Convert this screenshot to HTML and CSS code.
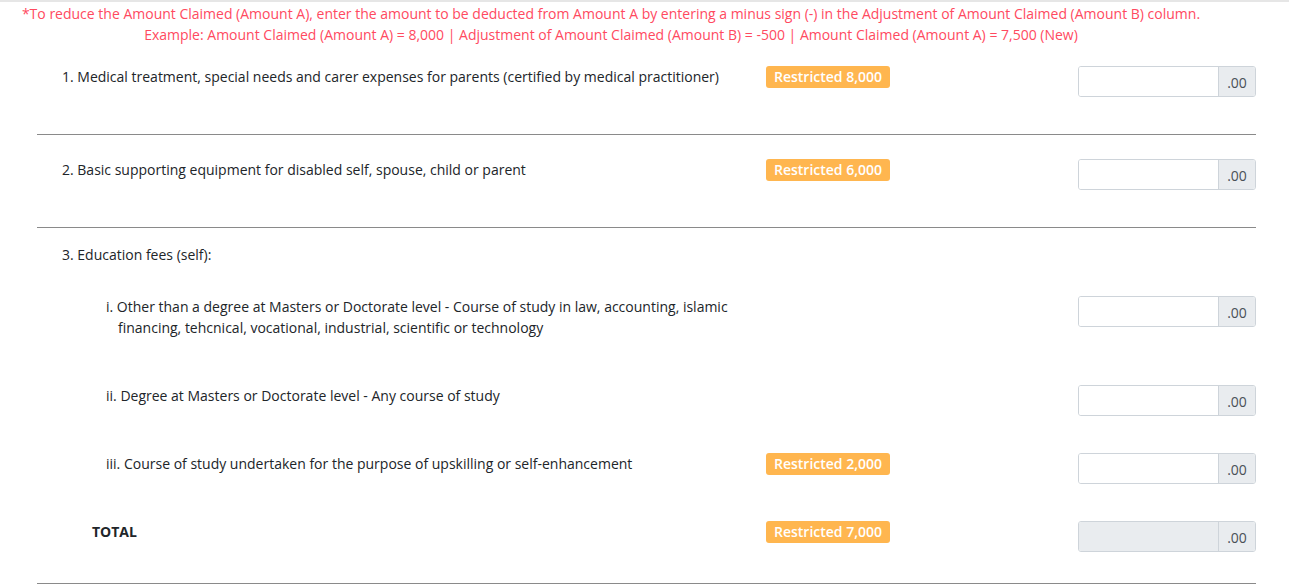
FILE: index.html
```html
<!DOCTYPE html>
<html>
<head>
<meta charset="utf-8">
<link rel="stylesheet" href="styles.css">
</head>
<body>
<div class="page">
  <div class="note">
    <div>*To reduce the Amount Claimed (Amount A), enter the amount to be deducted from Amount A by entering a minus sign (-) in the Adjustment of Amount Claimed (Amount B) column.</div>
    <div>Example: Amount Claimed (Amount A) = 8,000 | Adjustment of Amount Claimed (Amount B) = -500 | Amount Claimed (Amount A) = 7,500 (New)</div>
  </div>

  <div class="section first">
    <div class="item">
      <div class="label">1. Medical treatment, special needs and carer expenses for parents (certified by medical practitioner)</div>
      <div class="limit"><span class="badge">Restricted 8,000</span></div>
      <div class="amount"><div class="field"></div><div class="addon">.00</div></div>
    </div>
  </div>

  <div class="section">
    <div class="item">
      <div class="label">2. Basic supporting equipment for disabled self, spouse, child or parent</div>
      <div class="limit"><span class="badge">Restricted 6,000</span></div>
      <div class="amount"><div class="field"></div><div class="addon">.00</div></div>
    </div>
  </div>

  <div class="section group">
    <div class="title">3. Education fees (self):</div>
    <div class="item sub tall">
      <div class="label">i. Other than a degree at Masters or Doctorate level - Course of study in law, accounting, islamic financing, tehcnical, vocational, industrial, scientific or technology</div>
      <div class="limit"></div>
      <div class="amount"><div class="field"></div><div class="addon">.00</div></div>
    </div>
    <div class="item sub">
      <div class="label">ii. Degree at Masters or Doctorate level - Any course of study</div>
      <div class="limit"></div>
      <div class="amount"><div class="field"></div><div class="addon">.00</div></div>
    </div>
    <div class="item sub">
      <div class="label">iii. Course of study undertaken for the purpose of upskilling or self-enhancement</div>
      <div class="limit"><span class="badge">Restricted 2,000</span></div>
      <div class="amount"><div class="field"></div><div class="addon">.00</div></div>
    </div>
    <div class="item total last">
      <div class="label">TOTAL</div>
      <div class="limit"><span class="badge">Restricted 7,000</span></div>
      <div class="amount"><div class="field disabled"></div><div class="addon">.00</div></div>
    </div>
  </div>
</div>
</body>
</html>
```

FILE: styles.css
```css
html, body {
  margin: 0;
  padding: 0;
  background: #ffffff;
}
body {
  font-family: "Open Sans", "Noto Sans", sans-serif;
  font-size: 14px;
  color: #212529;
  border-top: 2px solid #e6e6e6;
}
.page {
  width: 1289px;
}
.note {
  width: 1222px;
  text-align: center;
  color: #ff4a5f;
  line-height: 21px;
  padding-top: 1px;
}
.section {
  margin-left: 37px;
  width: 1219px;
  border-bottom: 1px solid #8a8a8a;
  padding-top: 24px;
}
.section.first {
  padding-top: 21px;
}
.section.group {
  padding-top: 16px;
}
.title {
  padding-left: 25px;
  line-height: 22px;
  margin-bottom: 30px;
}
.item {
  display: grid;
  grid-template-columns: 729px 312px 178px;
  align-items: start;
  margin-bottom: 37px;
}
.item.tall {
  margin-bottom: 47px;
}
.item.last {
  margin-bottom: 31px;
}
.label {
  padding-left: 25px;
  padding-right: 10px;
  line-height: 22px;
}
.sub .label {
  padding-left: 81px;
  text-indent: -12px;
  line-height: 21px;
}
.total .label {
  padding-left: 55px;
  font-weight: 700;
}
.badge {
  display: inline-block;
  background: #ffb64f;
  color: #ffffff;
  font-weight: 600;
  font-size: 14px;
  line-height: 22px;
  height: 22px;
  padding: 0 8px;
  border-radius: 3px;
}
.amount {
  display: flex;
  height: 31px;
  box-sizing: border-box;
  border: 1px solid #ced4da;
  border-radius: 3px;
  overflow: hidden;
}
.field {
  flex: 1;
  background: #ffffff;
}
.field.disabled {
  background: #e9ecef;
}
.addon {
  width: 37px;
  background: #e9ecef;
  border-left: 1px solid #ced4da;
  color: #495057;
  display: flex;
  align-items: center;
  justify-content: center;
  padding-top: 2px;
  box-sizing: border-box;
}
```
